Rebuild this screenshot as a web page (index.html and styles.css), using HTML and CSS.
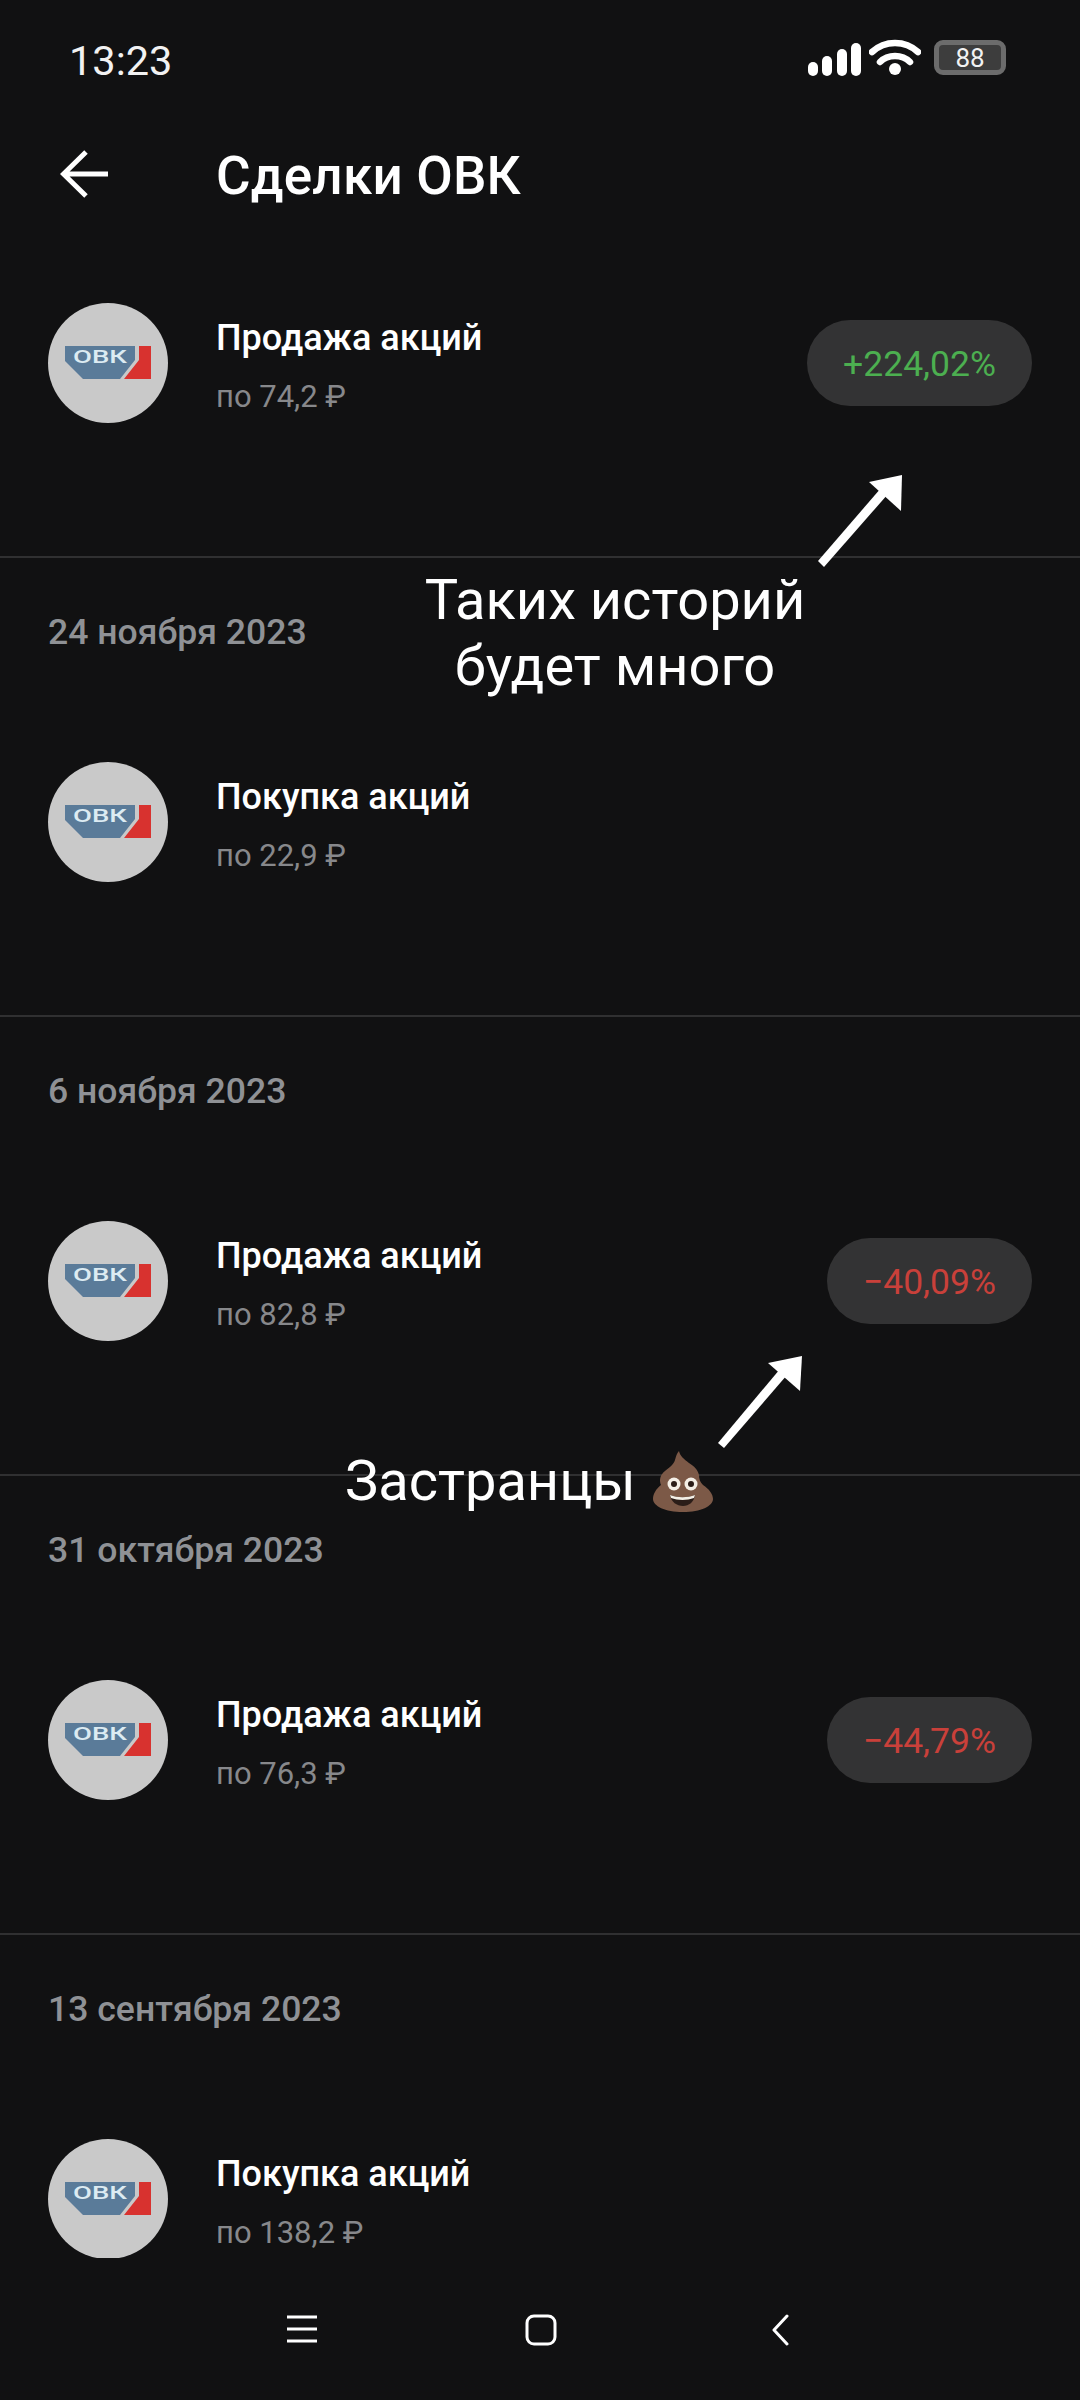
FILE: index.html
```html
<!DOCTYPE html>
<html lang="ru">
<head>
<meta charset="utf-8">
<title>Сделки ОВК</title>
<link rel="stylesheet" href="styles.css">
</head>
<body>
<div class="screen">
  <div class="status">
    <span class="time">13:23</span>
    <div class="status-icons">
      <svg class="signal" width="53" height="33" viewBox="0 0 53 33" fill="#fff">
        <rect x="0" y="19" width="10" height="14" rx="5"/>
        <rect x="14" y="13" width="10" height="20" rx="5"/>
        <rect x="29" y="6" width="10" height="27" rx="5"/>
        <rect x="43" y="0" width="10" height="33" rx="5"/>
      </svg>
      <svg class="wifi" width="52" height="38" viewBox="0 0 52 38" fill="none" stroke="#fff" stroke-width="6.5" stroke-linecap="round">
        <path d="M3 14C16 2 36 2 49 14"/>
        <path d="M11 24C19 16 33 16 41 24"/>
        <circle cx="26" cy="31" r="6" fill="#fff" stroke="none"/>
      </svg>
      <div class="battery">88</div>
    </div>
  </div>
  <header class="topbar">
    <svg class="back" width="48" height="48" viewBox="0 0 48 48" fill="none" stroke="#fff" stroke-width="5">
      <path d="M48 24H4M26 2L3.500 24L26 46"/>
    </svg>
    <h1 class="title">Сделки ОВК</h1>
  </header>
  <main class="list">
    <div class="row">
      <svg class="avatar" viewBox="0 0 120 120"><circle cx="60" cy="60" r="60" fill="#c9c9c9"/><path d="M17 43H87V57L72 76H35L17 58Z" fill="#5a7b99"/><path d="M91 43H103V76H76L91 57Z" fill="#d8322f"/><text x="25" y="60" class="logo-text" textLength="54" lengthAdjust="spacingAndGlyphs">ОВК</text></svg>
      <div class="info"><div class="name">Продажа акций</div><div class="price">по 74,2 ₽</div></div>
      <div class="pill gain">+224,02%</div>
    </div>
    <section class="group">
      <div class="date">24 ноября 2023</div>
      <div class="row">
        <svg class="avatar" viewBox="0 0 120 120"><circle cx="60" cy="60" r="60" fill="#c9c9c9"/><path d="M17 43H87V57L72 76H35L17 58Z" fill="#5a7b99"/><path d="M91 43H103V76H76L91 57Z" fill="#d8322f"/><text x="25" y="60" class="logo-text" textLength="54" lengthAdjust="spacingAndGlyphs">ОВК</text></svg>
        <div class="info"><div class="name">Покупка акций</div><div class="price">по 22,9 ₽</div></div>
      </div>
    </section>
    <section class="group">
      <div class="date">6 ноября 2023</div>
      <div class="row">
        <svg class="avatar" viewBox="0 0 120 120"><circle cx="60" cy="60" r="60" fill="#c9c9c9"/><path d="M17 43H87V57L72 76H35L17 58Z" fill="#5a7b99"/><path d="M91 43H103V76H76L91 57Z" fill="#d8322f"/><text x="25" y="60" class="logo-text" textLength="54" lengthAdjust="spacingAndGlyphs">ОВК</text></svg>
        <div class="info"><div class="name">Продажа акций</div><div class="price">по 82,8 ₽</div></div>
        <div class="pill loss">−40,09%</div>
      </div>
    </section>
    <section class="group">
      <div class="date">31 октября 2023</div>
      <div class="row">
        <svg class="avatar" viewBox="0 0 120 120"><circle cx="60" cy="60" r="60" fill="#c9c9c9"/><path d="M17 43H87V57L72 76H35L17 58Z" fill="#5a7b99"/><path d="M91 43H103V76H76L91 57Z" fill="#d8322f"/><text x="25" y="60" class="logo-text" textLength="54" lengthAdjust="spacingAndGlyphs">ОВК</text></svg>
        <div class="info"><div class="name">Продажа акций</div><div class="price">по 76,3 ₽</div></div>
        <div class="pill loss">−44,79%</div>
      </div>
    </section>
    <section class="group">
      <div class="date">13 сентября 2023</div>
      <div class="row">
        <svg class="avatar" viewBox="0 0 120 120"><circle cx="60" cy="60" r="60" fill="#c9c9c9"/><path d="M17 43H87V57L72 76H35L17 58Z" fill="#5a7b99"/><path d="M91 43H103V76H76L91 57Z" fill="#d8322f"/><text x="25" y="60" class="logo-text" textLength="54" lengthAdjust="spacingAndGlyphs">ОВК</text></svg>
        <div class="info"><div class="name">Покупка акций</div><div class="price">по 138,2 ₽</div></div>
      </div>
    </section>
  </main>
  <nav class="navbar">
    <svg width="30" height="30" viewBox="0 0 30 30" stroke="#fff" stroke-width="3"><path d="M0 3H30M0 15H30M0 27H30"/></svg>
    <svg width="32" height="32" viewBox="0 0 32 32" fill="none" stroke="#fff" stroke-width="3"><rect x="2" y="2" width="28" height="28" rx="7"/></svg>
    <svg class="nav-back" width="18" height="32" viewBox="0 0 18 32" fill="none" stroke="#fff" stroke-width="3" stroke-linecap="round" stroke-linejoin="round"><path d="M16 2L3 16L16 30"/></svg>
  </nav>

  <svg class="arrows" width="1080" height="2400" viewBox="0 0 1080 2400" fill="#fff" stroke="none">
    <path d="M818 561L824 567L888 494L881 488Z"/>
    <path d="M902 475L869 482L901 511Z"/>
    <path d="M718 1443L724 1448L787 1375L780 1369Z"/>
    <path d="M802 1356L768 1363L800 1391Z"/>
  </svg>
  <div class="note note-stories">Таких историй<br>будет много</div>
  <div class="note note-zastr">Застранцы
    <svg class="poop" width="60" height="61" viewBox="0 0 60 61">
      <path d="M26 0C27 5 31 8 36 12C41 15 45 19 46 24C46 28 47 31 50 34C56 38 60 43 60 48C60 55 48 61 30 61C12 61 0 55 0 48C0 43 3 38 8 34C6 29 7 24 12 20C16 17 21 13 22 9C23 5 24 2 26 0Z" fill="#7c5947"/>
      <circle cx="21" cy="33" r="6.500" fill="#f4efe6"/>
      <circle cx="38" cy="33" r="6.500" fill="#f4efe6"/>
      <circle cx="21" cy="33" r="3" fill="#2b1d18"/>
      <circle cx="38" cy="33" r="3" fill="#2b1d18"/>
      <path d="M17 44C25 47 34 47 42 44C41 51 36 55 30 55C24 55 18 51 17 44Z" fill="#2b1d18"/>
      <path d="M17 44C25 47 34 47 42 44L41 47C34 49.500 25 49.500 18 47Z" fill="#f4efe6"/>
    </svg>
  </div>
</div>
</body>
</html>
```
FILE: styles.css
```css
* { box-sizing: border-box; }
html, body { margin: 0; padding: 0; }
body { background: #111112; font-family: Roboto, "Noto Sans", sans-serif; color: #fff; }
.logo-text { font-family: Roboto, sans-serif; font-size: 18px; font-weight: 500; fill: #dcebf2; }

.screen { position: relative; width: 1080px; height: 2400px; display: flex; flex-direction: column; overflow: hidden; }

.status { height: 100px; padding: 22px 74px 0 69px; display: flex; justify-content: space-between; align-items: flex-start; }
.time { font-size: 41.500px; line-height: 78px; height: 78px; color: #f2f2f2; }
.status-icons { display: flex; align-items: center; height: 78px; }
.signal { margin-top: -3px; }
.wifi { margin-left: 8px; margin-top: -8px; }
.battery { margin-left: 13px; margin-top: -7px; width: 72px; height: 35px; border: 5px solid #6c6c6c; border-radius: 9px; background: #3d3d3d; font-size: 26px; line-height: 27px; text-align: center; color: #f2f2f2; }

.topbar { height: 147px; padding-left: 60px; display: flex; align-items: center; }
.title { margin: 4px 0 0 108px; font-size: 53px; font-weight: 500; line-height: 60px; letter-spacing: 0.2px; }

.list { flex: 1; min-height: 0; overflow: hidden; }
.group { border-top: 2px solid #303031; }
.date { height: 148px; padding-left: 48px; display: flex; align-items: center; font-size: 35.600px; font-weight: 500; color: #8f9195; }
.row { height: 309px; padding: 56px 48px 0 48px; display: flex; align-items: flex-start; }
.avatar { width: 120px; height: 120px; flex: none; }
.info { margin-left: 48px; height: 120px; padding-top: 8px; display: flex; flex-direction: column; justify-content: center; }
.name { font-size: 36px; font-weight: 500; line-height: 46px; color: #fff; }
.price { margin-top: 13px; font-size: 31px; line-height: 46px; color: #87888b; }
.pill { margin-left: auto; margin-top: 17px; height: 86px; padding: 2px 36px 0; border-radius: 43px; background: #333334; display: flex; align-items: center; font-size: 35.500px; }
.gain { color: #4caf50; }
.loss { color: #c9403a; }

.navbar { height: 142px; display: flex; justify-content: flex-start; align-items: flex-start; padding: 56px 0 0 287px; gap: 208px; }
.nav-back { margin-left: 6px; }

.arrows { position: absolute; left: 0; top: 0; pointer-events: none; }
.note { position: absolute; font-size: 56px; line-height: 66px; color: #fff; white-space: nowrap; }
.note-stories { left: 415px; top: 567px; width: 400px; text-align: center; }
.note-zastr { left: 345px; top: 1448px; display: flex; align-items: center; gap: 17px; }
```
